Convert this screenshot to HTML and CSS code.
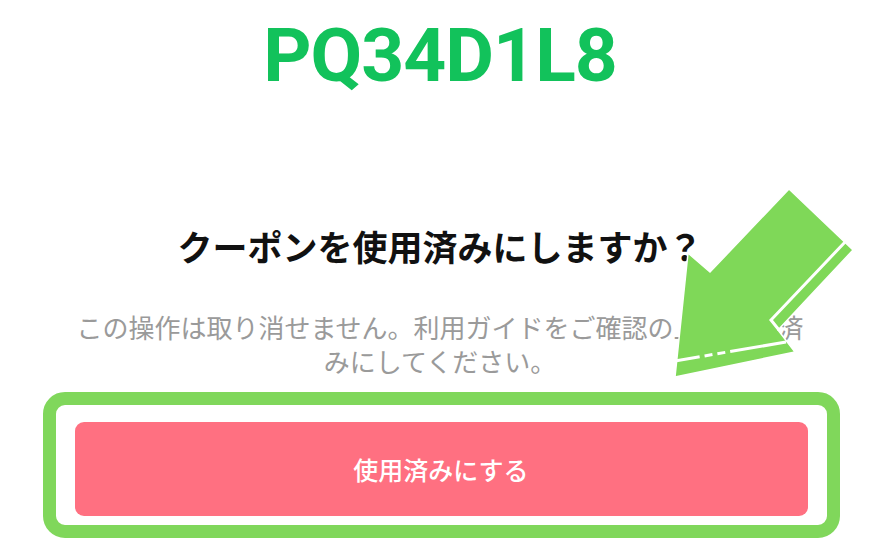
FILE: index.html
```html
<!DOCTYPE html>
<html lang="ja">
<head>
<meta charset="utf-8">
<title>クーポン</title>
<link rel="stylesheet" href="styles.css">
</head>
<body>
<main class="sheet">
  <div class="code">PQ34D1L8</div>
  <h1 class="title">クーポンを使用済みにしますか？</h1>
  <p class="note">この操作は取り消せません。利用ガイドをご確認の上、使用済みにしてください。</p>
  <div class="highlight">
    <button class="use-btn" type="button">使用済みにする</button>
  </div>
</main>
<svg class="arrow" width="880" height="558" viewBox="0 0 880 558" aria-hidden="true">
  <polygon points="789,189 853,250 778,330 795,352 675,377 688,253 710,272" fill="#7fd858" stroke="#ffffff" stroke-width="1.5" stroke-linejoin="miter"/>
  <polyline points="846,241 771,320 779,330" fill="none" stroke="#ffffff" stroke-width="3"/>
  <line x1="675" y1="361" x2="786" y2="342" stroke="#ffffff" stroke-width="3" stroke-dasharray="25 5 8 5 8 5 200"/>
</svg>
</body>
</html>
```

FILE: styles.css
```css
html, body {
  margin: 0;
  padding: 0;
  background: #ffffff;
}

body {
  width: 880px;
  height: 558px;
  overflow: hidden;
  position: relative;
  font-family: "Noto Sans CJK JP", "Noto Sans", sans-serif;
}

.sheet {
  display: flex;
  flex-direction: column;
  align-items: center;
}

.code {
  font-family: Roboto, "Liberation Sans", Arial, sans-serif;
  font-weight: 700;
  font-size: 75px;
  line-height: 75px;
  color: #12c25b;
  padding-top: 18px;
  letter-spacing: -1px;
}

.title {
  margin: 128px 0 0;
  font-size: 35px;
  line-height: 50px;
  font-weight: 700;
  color: #111111;
  text-align: center;
}

.note {
  margin: 39px 0 0;
  width: 740px;
  font-size: 26px;
  line-height: 34px;
  color: #9a9a9a;
  text-align: center;
}

.highlight {
  box-sizing: border-box;
  margin-top: 14px;
  width: 797px;
  height: 146px;
  border: 13px solid #80d75b;
  border-radius: 22px;
  padding: 17px 19px 9px;
  margin-left: 2px;
}

.use-btn {
  display: flex;
  align-items: center;
  justify-content: center;
  width: 100%;
  height: 94px;
  border: 0;
  border-radius: 9px;
  background: #ff7081;
  color: #ffffff;
  font-family: "Noto Sans CJK JP", "Noto Sans", sans-serif;
  font-size: 25px;
  font-weight: 500;
  padding: 0;
}

.arrow {
  position: absolute;
  left: 0;
  top: 0;
}
```
